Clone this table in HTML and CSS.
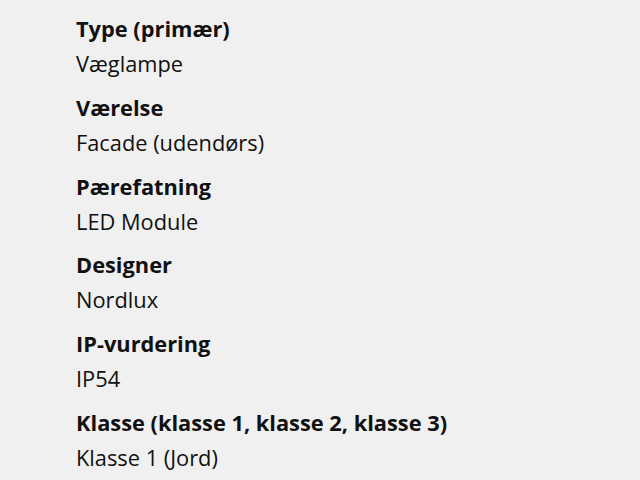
FILE: index.html
```html
<!DOCTYPE html>
<html lang="da">
<head>
<meta charset="utf-8">
<title>Specifikationer</title>
<link rel="stylesheet" href="styles.css">
</head>
<body>
<dl class="specs">
  <div class="spec"><dt>Type (primær)</dt><dd>Væglampe</dd></div>
  <div class="spec"><dt>Værelse</dt><dd>Facade (udendørs)</dd></div>
  <div class="spec"><dt>Pærefatning</dt><dd>LED Module</dd></div>
  <div class="spec"><dt>Designer</dt><dd>Nordlux</dd></div>
  <div class="spec"><dt>IP-vurdering</dt><dd>IP54</dd></div>
  <div class="spec"><dt>Klasse (klasse 1, klasse 2, klasse 3)</dt><dd>Klasse 1 (Jord)</dd></div>
</dl>
</body>
</html>
```
FILE: styles.css
```css
html, body {
  margin: 0;
  padding: 0;
  background: #f0f0f0;
}
body {
  font-family: "Open Sans", "Noto Sans", "Liberation Sans", sans-serif;
  color: #111;
}
.specs {
  margin: 0;
  padding: 11px 0 0 76px;
  display: flex;
  flex-direction: column;
  gap: 8.8px;
}
.spec dt,
.spec dd {
  margin: 0;
  font-size: 21.8px;
  line-height: 35px;
}
.spec dt {
  font-weight: 700;
}
```
